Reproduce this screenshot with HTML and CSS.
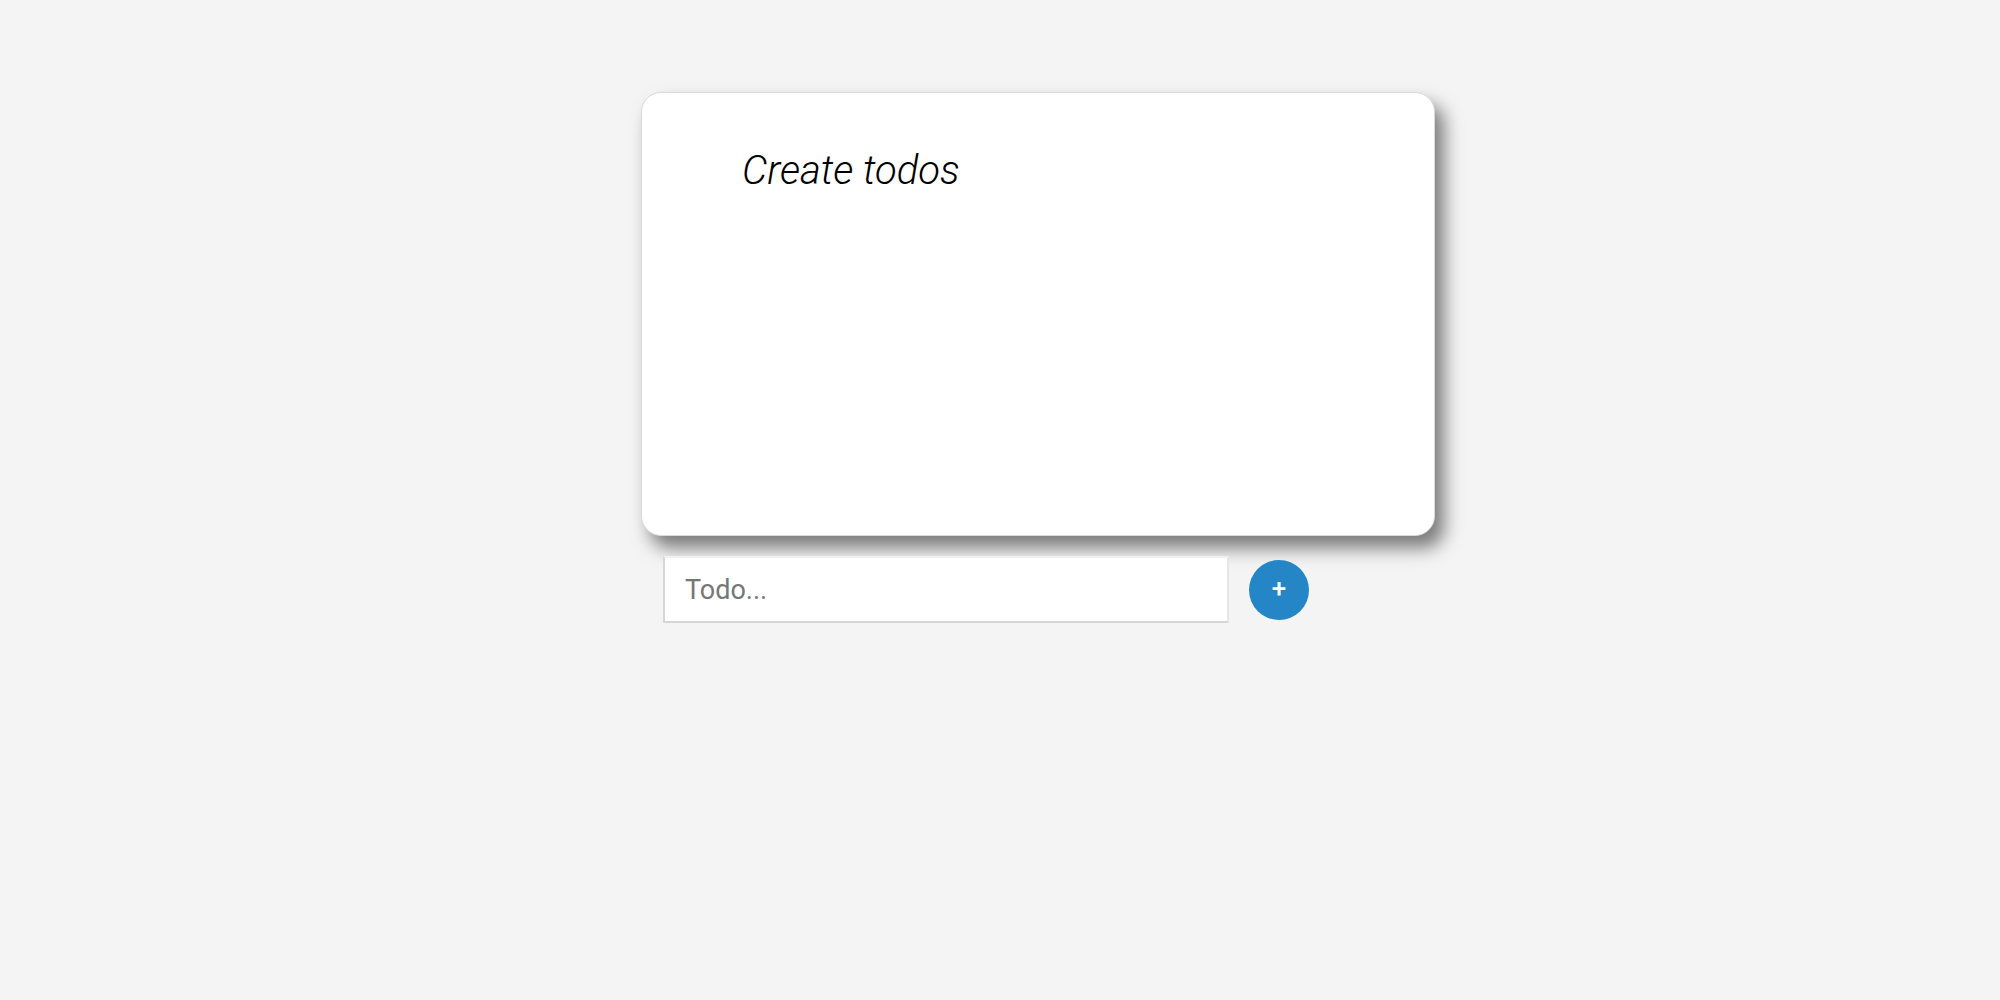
FILE: index.html
```html
<!DOCTYPE html>
<html>
<head>
<meta charset="utf-8">
<link rel="stylesheet" href="styles.css">
</head>
<body>
<main class="app">
  <section class="card">
    <h1 class="title">Create todos</h1>
  </section>
  <form class="add-form">
    <input class="todo-input" type="text" placeholder="Todo...">
    <button class="add-btn" type="button">+</button>
  </form>
</main>
</body>
</html>
```
FILE: styles.css
```css
html, body {
  margin: 0;
  padding: 0;
  background: #f4f4f4;
  font-family: Roboto, "Liberation Sans", sans-serif;
}
.app {
  padding: 92px 0 0 641px;
  width: 794px;
}
.card {
  box-sizing: border-box;
  height: 444px;
  background: #fff;
  border: 1px solid #dadada;
  border-radius: 20px;
  box-shadow: 9px 12px 18px rgba(0, 0, 0, 0.5);
  padding: 46px 0 0 100px;
}
.title {
  margin: 0;
  font-size: 40px;
  font-weight: 300;
  font-style: italic;
  color: #000;
  line-height: 64px;
}
.add-form {
  display: flex;
  align-items: center;
  margin: 20px 0 0 22px;
}
.todo-input {
  box-sizing: border-box;
  width: 566px;
  height: 67px;
  border: 2px solid #d6d6d6;
  border-top-color: #f0f0f0;
  border-right-color: #e6e6e6;
  background: #fff;
  padding: 0 0 0 20px;
  font-family: Roboto, "Liberation Sans", sans-serif;
  font-size: 27px;
  outline: none;
}
.todo-input::placeholder {
  color: #767676;
}
.add-btn {
  margin-left: 20px;
  width: 60px;
  height: 60px;
  border-radius: 50%;
  border: none;
  background: #2586c7;
  color: #fff;
  font-family: Roboto, "Liberation Sans", sans-serif;
  font-size: 26px;
  font-weight: 500;
  line-height: 1;
  padding: 0 0 3px 0;
  cursor: pointer;
}
```
